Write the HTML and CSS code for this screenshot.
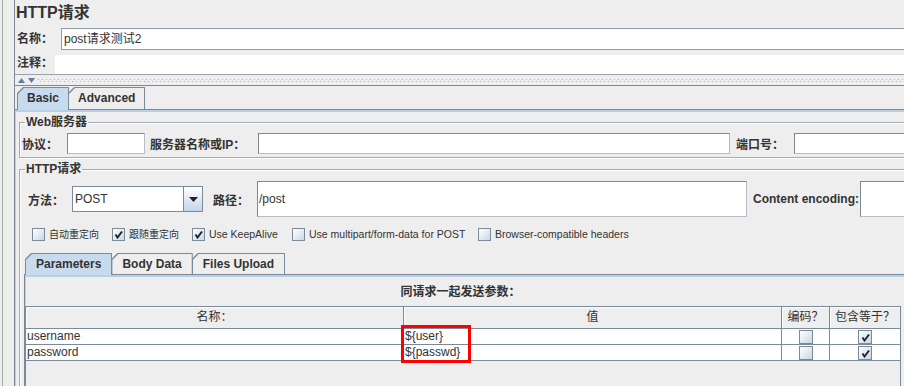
FILE: index.html
```html
<!DOCTYPE html>
<html lang="zh-CN">
<head>
    <meta charset="UTF-8">
    <title>HTTP请求</title>
    <link rel="stylesheet" href="styles.css">
</head>
<body>
<div class="window">
    <div class="main">
        <h1 class="title">HTTP请求</h1>

        <div class="name-panel">
            <div class="name-row">
                <span class="lbl name-lbl">名称：</span>
                <div class="field name-field">post请求测试2</div>
            </div>
            <div class="comment-row">
                <span class="lbl comment-lbl">注释：</span>
                <div class="comment-field"></div>
            </div>
        </div>

        <div class="splitter">
            <svg class="arrows" width="18" height="5" viewBox="0 0 18 5">
                <path d="M0 5 L3.5 0 L7 5 Z"/>
                <path d="M10 0 L17 0 L13.5 5 Z"/>
            </svg>
            <div class="dots"></div>
        </div>

        <div class="tabs main-tabs">
            <div class="tab active"><span>Basic</span></div>
            <div class="tab"><span>Advanced</span></div>
        </div>

        <div class="tab-body">
            <fieldset class="group web-group">
                <legend>Web服务器</legend>
                <div class="row web-row">
                    <span class="lbl proto-lbl">协议：</span>
                    <div class="field proto-field"></div>
                    <span class="lbl host-lbl">服务器名称或IP：</span>
                    <div class="field host-field"></div>
                    <span class="lbl port-lbl">端口号：</span>
                    <div class="field port-field"></div>
                </div>
            </fieldset>

            <fieldset class="group http-group">
                <legend>HTTP请求</legend>
                <div class="row http-row">
                    <span class="lbl method-lbl">方法：</span>
                    <div class="combo">
                        <div class="combo-value">POST</div>
                        <div class="combo-btn">
                            <svg width="9" height="5" viewBox="0 0 9 5"><path d="M0 0 L9 0 L4.5 5 Z"/></svg>
                        </div>
                    </div>
                    <span class="lbl path-lbl">路径：</span>
                    <div class="field path-field">/post</div>
                    <span class="lbl enc-lbl">Content encoding:</span>
                    <div class="field enc-field"></div>
                </div>

                <div class="checks">
                    <div class="check redirect"><span class="cb"></span>自动重定向</div>
                    <div class="check follow"><span class="cb checked"><svg width="9" height="9" viewBox="0 0 9 9"><path d="M1.5 4.5 L3.5 7.5 L8 1.5"/></svg></span>跟随重定向</div>
                    <div class="check keepalive"><span class="cb checked"><svg width="9" height="9" viewBox="0 0 9 9"><path d="M1.5 4.5 L3.5 7.5 L8 1.5"/></svg></span>Use KeepAlive</div>
                    <div class="check multipart"><span class="cb"></span>Use multipart/form-data for POST</div>
                    <div class="check"><span class="cb"></span>Browser-compatible headers</div>
                </div>

                <div class="param-pane">
                    <div class="tabs param-tabs">
                        <div class="tab active"><span>Parameters</span></div>
                        <div class="tab"><span>Body Data</span></div>
                        <div class="tab"><span>Files Upload</span></div>
                    </div>
                    <div class="param-body">
                        <div class="caption">同请求一起发送参数：</div>
                        <div class="table-wrap">
                            <div class="grid">
                                <div class="th">名称：</div>
                                <div class="th">值</div>
                                <div class="th">编码？</div>
                                <div class="th last">包含等于？</div>

                                <div class="td">username</div>
                                <div class="td">${user}</div>
                                <div class="td center"><span class="cb"></span></div>
                                <div class="td center last"><span class="cb checked"><svg width="9" height="9" viewBox="0 0 9 9"><path d="M1.5 4.5 L3.5 7.5 L8 1.5"/></svg></span></div>

                                <div class="td">password</div>
                                <div class="td">${passwd}</div>
                                <div class="td center"><span class="cb"></span></div>
                                <div class="td center last"><span class="cb checked"><svg width="9" height="9" viewBox="0 0 9 9"><path d="M1.5 4.5 L3.5 7.5 L8 1.5"/></svg></span></div>
                            </div>
                            <div class="mark"></div>
                        </div>
                    </div>
                </div>
            </fieldset>
        </div>
    </div>
</div>
</body>
</html>
```

FILE: styles.css
```css
*{
    margin:0;
    padding:0;
    box-sizing:border-box;
}
body {
    width:904px;
    height:386px;
    overflow:hidden;
    background:#eeeeee;
    font-family:"Liberation Sans", "Noto Sans CJK SC", sans-serif;
    font-size:12px;
    color:#333;
}
.window {
    height:386px;
    margin-left:2px;
    border-left:1px solid #a9a9a9;
    padding-left:11px;
    overflow:hidden;
}
.main {
    width:1000px;
    height:386px;
    border-left:1px solid #7a8a99;
}
.title {
    height:27px;
    line-height:26px;
    font-size:16px;
    font-weight:bold;
    padding-left:1px;
}
.lbl {
    flex-shrink:0;
    font-weight:bold;
    white-space:nowrap;
}
.field {
    flex-shrink:0;
    background:#fff;
    border:1px solid #7a8a99;
    border-right-color:#b5bec8;
    border-bottom-color:#b5bec8;
    white-space:nowrap;
}

/* name / comment */
.name-panel {
    border-bottom:1px solid #98a3ae;
}
.name-row {
    display:flex;
    height:23px;
    padding-top:1px;
}
.name-lbl {
    width:46px;
    padding-left:2px;
    line-height:22px;
}
.name-field {
    flex:1;
    height:22px;
    padding-left:2px;
    line-height:20px;
    border-color:#8e9aa6;
}
.comment-row {
    display:flex;
    height:24px;
}
.comment-lbl {
    width:40px;
    padding-left:2px;
    line-height:26px;
}
.comment-field {
    flex:1;
    margin-top:5px;
    height:19px;
    background:#fff;
}

/* splitter */
.splitter {
    display:flex;
    height:11px;
    border-bottom:1px solid #7a8a99;
}
.arrows {
    margin:3px 0 0 3px;
    fill:#5d7ea6;
}
.dots {
    flex:1;
    margin:4px 0 0 2px;
    height:3px;
    background:
        repeating-linear-gradient(90deg, #9fb3c8 0 1px, transparent 1px 4px) 0 0 / 100% 1px no-repeat,
        repeating-linear-gradient(90deg, #9fb3c8 0 1px, transparent 1px 4px) 2px 2px / 100% 1px no-repeat;
}

/* tabs */
.tabs {
    display:flex;
    align-items:flex-end;
    height:22px;
}
.main-tabs {
    margin-top:1px;
    padding-left:2px;
}
.tab {
    height:22px;
    margin-right:-1px;
    padding:1px 1px 0 1px;
    background:#7a8a99;
    clip-path:polygon(0 6px, 6px 0, 100% 0, 100% 100%, 0 100%);
}
.tab span {
    display:block;
    height:100%;
    padding:0 9px;
    line-height:20px;
    font-weight:bold;
    background:#eeeeee;
    clip-path:polygon(0 6px, 6px 0, 100% 0, 100% 100%, 0 100%);
}
.tab.active {
    position:relative;
    z-index:1;
    height:23px;
    margin-bottom:-1px;
}
.tab.active span {
    background:#c8daee;
}
.tab-body {
    height:300px;
    border-top:1px solid #7a8a99;
    box-shadow:inset 1px 2px 0 #b8cfe5;
    padding-top:5px;
}

/* titled groups */
.group {
    margin-left:4px;
    width:1000px;
    min-width:0;
    border:1px solid #a3abb3;
    box-shadow:inset 1px 1px 0 #fff, 1px 1px 0 #fff;
}
.group legend {
    margin-left:5px;
    padding:0 1px;
    line-height:14px;
    font-weight:bold;
}
.row {
    display:flex;
    align-items:center;
}
.web-group {
    padding-bottom:3px;
}
.web-row {
    height:21px;
    margin-top:4px;
    padding-left:2px;
}
.web-row .field {
    height:21px;
}
.proto-lbl {
    width:45px;
}
.proto-field {
    width:78px;
}
.host-lbl {
    width:108px;
    margin-left:5px;
}
.host-field {
    width:472px;
}
.port-lbl {
    width:58px;
    margin-left:6px;
}
.port-field {
    width:200px;
}

.http-group {
    margin-top:4px;
    height:240px;
}
.http-row {
    height:36px;
    margin-top:5px;
    padding-left:8px;
}
.method-lbl {
    width:44px;
}
.combo {
    display:flex;
    flex-shrink:0;
    height:26px;
}
.combo-value {
    width:111px;
    background:#fff;
    border:1px solid #7a8a99;
    border-right:none;
    padding-left:2px;
    line-height:24px;
}
.combo-btn {
    display:flex;
    align-items:center;
    justify-content:center;
    width:20px;
    border:1px solid #7a8a99;
    background:linear-gradient(#ffffff, #c3d5e8);
    fill:#222;
}
.path-lbl {
    width:44px;
    margin-left:10px;
}
.path-field {
    width:490px;
    height:36px;
    line-height:34px;
    padding-left:1px;
}
.enc-lbl {
    width:107px;
    margin-left:6px;
}
.enc-field {
    width:200px;
    height:36px;
}

/* checkboxes */
.checks {
    display:flex;
    margin-top:11px;
    padding-left:12px;
    height:13px;
}
.check {
    display:flex;
    flex-shrink:0;
    align-items:center;
    gap:4px;
    font-size:10.5px;
    line-height:13px;
    white-space:nowrap;
}
.redirect, .follow {
    width:80px;
    font-size:10px;
}
.keepalive {
    width:100px;
}
.multipart {
    width:186px;
}
.cb {
    display:inline-flex;
    flex-shrink:0;
    align-items:center;
    justify-content:center;
    width:13px;
    height:13px;
    border:1px solid #7a8a99;
    background:linear-gradient(135deg, #ffffff, #c9d7e5);
}
.cb svg {
    fill:none;
    stroke:#1e2228;
    stroke-width:1.9;
}

/* parameters */
.param-pane {
    margin:12px 0 0 4px;
}
.param-tabs {
    height:21px;
    padding-left:1px;
}
.param-tabs .tab {
    height:21px;
}
.param-tabs .tab.active {
    height:22px;
}
.param-tabs .tab span {
    padding:0 10px;
    line-height:20px;
}
.param-body {
    height:120px;
    border-top:1px solid #7a8a99;
    border-left:1px solid #7a8a99;
    box-shadow:inset 1px 2px 0 #b8cfe5;
}
.caption {
    width:871px;
    margin-top:10px;
    line-height:15px;
    text-align:center;
    font-weight:bold;
}
.table-wrap {
    position:relative;
    width:876px;
    height:100px;
    margin-top:6px;
    border:1px solid #7a8a99;
    border-bottom:none;
}
.grid {
    display:grid;
    grid-template-columns:378px 378px 48px 70px;
}
.th {
    height:22px;
    line-height:21px;
    text-align:center;
    border-right:1px solid #7a8a99;
    border-bottom:1px solid #7a8a99;
    box-shadow:inset 1px 1px 0 #fff;
    background:#eeeeee;
}
.td {
    height:16px;
    line-height:15px;
    padding-left:1px;
    background:#fff;
    border-right:1px solid #7a8a99;
    border-bottom:1px solid #7a8a99;
}
.th.last, .td.last {
    border-right:none;
}
.td.center {
    display:flex;
    align-items:center;
    justify-content:center;
    padding-left:0;
}
.td .cb {
    width:14px;
    height:14px;
    margin-top:1px;
}
.mark {
    position:absolute;
    left:375px;
    top:18px;
    width:70px;
    height:38px;
    border:3px solid #ff0000;
}
```
